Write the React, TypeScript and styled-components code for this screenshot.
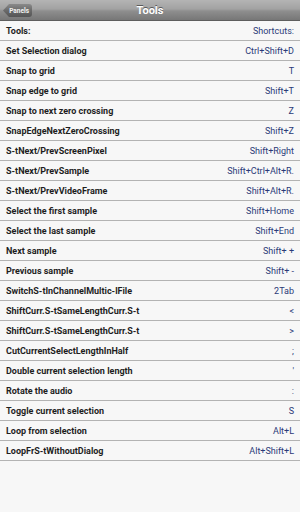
import styled, { createGlobalStyle } from "styled-components";

const shortcuts: Array<{ name: string; keys: string }> = [
  { name: "Tools:", keys: "Shortcuts:" },
  { name: "Set Selection dialog", keys: "Ctrl+Shift+D" },
  { name: "Snap to grid", keys: "T" },
  { name: "Snap edge to grid", keys: "Shift+T" },
  { name: "Snap to next zero crossing", keys: "Z" },
  { name: "SnapEdgeNextZeroCrossing", keys: "Shift+Z" },
  { name: "S-tNext/PrevScreenPixel", keys: "Shift+Right" },
  { name: "S-tNext/PrevSample", keys: "Shift+Ctrl+Alt+R." },
  { name: "S-tNext/PrevVideoFrame", keys: "Shift+Alt+R." },
  { name: "Select the first sample", keys: "Shift+Home" },
  { name: "Select the last sample", keys: "Shift+End" },
  { name: "Next sample", keys: "Shift+ +" },
  { name: "Previous sample", keys: "Shift+ -" },
  { name: "SwitchS-tInChannelMultic-lFile", keys: "2Tab" },
  { name: "ShiftCurr.S-tSameLengthCurr.S-t", keys: "<" },
  { name: "ShiftCurr.S-tSameLengthCurr.S-t", keys: ">" },
  { name: "CutCurrentSelectLengthInHalf", keys: ";" },
  { name: "Double current selection length", keys: "'" },
  { name: "Rotate the audio", keys: ":" },
  { name: "Toggle current selection", keys: "S" },
  { name: "Loop from selection", keys: "Alt+L" },
  { name: "LoopFrS-tWithoutDialog", keys: "Alt+Shift+L" },
];

function App() {
  return (
    <Screen>
      <GlobalStyle />
      <TitleBar>
        <BackButton>
          <BackLabel>Panels</BackLabel>
        </BackButton>
        <Title>Tools</Title>
      </TitleBar>
      <List>
        {shortcuts.map((item, i) => (
          <Row key={i}>
            <Name>{item.name}</Name>
            <Keys>{item.keys}</Keys>
          </Row>
        ))}
      </List>
    </Screen>
  );
}

const GlobalStyle = createGlobalStyle`
  html, body {
    margin: 0;
    padding: 0;
    background: #f7f7f7;
  }
  body {
    font-family: Roboto, "Liberation Sans", sans-serif;
  }
`;

const Screen = styled.div`
  width: 300px;
  height: 512px;
  display: flex;
  flex-direction: column;
  background: #f7f7f7;
  overflow: hidden;
`;

const TitleBar = styled.header`
  position: relative;
  height: 21px;
  flex-shrink: 0;
  display: flex;
  align-items: center;
  justify-content: center;
  background: linear-gradient(
    to bottom,
    #b4b4b4 0%,
    #a2a2a2 45%,
    #8e8e8e 55%,
    #777777 100%
  );
  border-bottom: 1px solid #5e5e5e;
  box-sizing: border-box;
`;

const Title = styled.h1`
  margin: 0;
  font-size: 11px;
  font-weight: bold;
  color: #ffffff;
  text-shadow: 0 -1px 0 #5a5a5a;
`;

const BackButton = styled.button`
  all: unset;
  position: absolute;
  left: 3px;
  top: 4px;
  height: 13px;
  width: 29px;
  display: flex;
  align-items: center;
  justify-content: flex-end;
  padding-right: 3px;
  box-sizing: border-box;
  background: linear-gradient(to bottom, #8a8a8a 0%, #6a6a6a 50%, #555555 100%);
  clip-path: polygon(6px 0, 100% 0, 100% 100%, 6px 100%, 0 50%);
  border-radius: 0 3px 3px 0;
`;

const BackLabel = styled.span`
  font-size: 6.5px;
  font-weight: bold;
  color: #f2f2f2;
`;

const List = styled.section`
  display: flex;
  flex-direction: column;
`;

const Row = styled.div`
  height: 20px;
  flex-shrink: 0;
  display: flex;
  align-items: center;
  justify-content: space-between;
  padding: 0 6px;
  border-bottom: 1px solid #b3b3b3;
  box-sizing: border-box;
`;

const Name = styled.span`
  font-size: 9px;
  font-weight: bold;
  color: #1e1e1e;
  white-space: nowrap;
`;

const Keys = styled.span`
  font-size: 9px;
  color: #2b3a78;
  white-space: nowrap;
`;

export default App;
